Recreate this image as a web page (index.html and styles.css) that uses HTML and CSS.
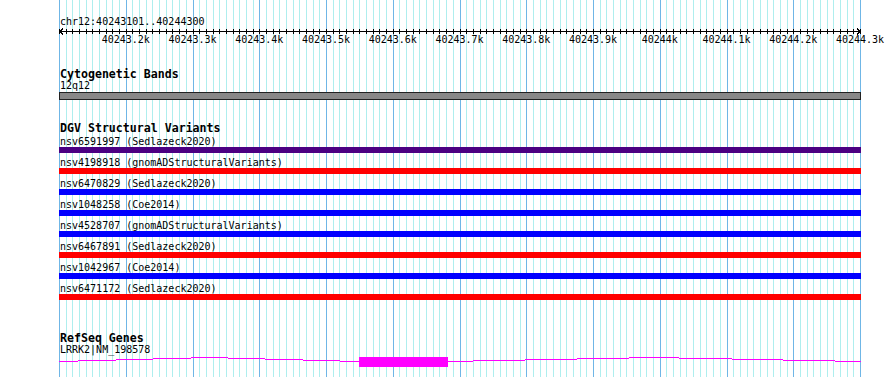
FILE: index.html
```html
<!DOCTYPE html>
<html lang="en">
<head>
	<meta charset="UTF-8">
	<title>chr12:40243101..40244300</title>
	<link rel="stylesheet" href="styles.css">
</head>
<body>
	<div class="panel">
		<div class="plot">
			<!-- 10bp = 6.675px, so the line pattern repeats every 400bp (267px) -->
			<svg class="grid" width="802" height="377" viewBox="0 0 802 377" shape-rendering="crispEdges">
				<defs>
					<path id="steps" d="M0.5 0V377M7.5 0V377M13.5 0V377M20.5 0V377M27.5 0V377M33.5 0V377M40.5 0V377M47.5 0V377M53.5 0V377M60.5 0V377M67.5 0V377M73.5 0V377M80.5 0V377M87.5 0V377M93.5 0V377M100.5 0V377M107.5 0V377M113.5 0V377M120.5 0V377M127.5 0V377M134.5 0V377M140.5 0V377M147.5 0V377M154.5 0V377M160.5 0V377M167.5 0V377M174.5 0V377M180.5 0V377M187.5 0V377M194.5 0V377M200.5 0V377M207.5 0V377M214.5 0V377M220.5 0V377M227.5 0V377M234.5 0V377M240.5 0V377M247.5 0V377M254.5 0V377M260.5 0V377"/>
					<pattern id="gridlines" width="267" height="377" patternUnits="userSpaceOnUse">
						<use href="#steps" stroke="#aeeeee"/>
						<path d="M0.5 0V377M67.5 0V377M134.5 0V377M200.5 0V377" stroke="#6fb6e6"/>
					</pattern>
					<pattern id="ticks" y="1" width="267" height="5" patternUnits="userSpaceOnUse">
						<use href="#steps" stroke="#000"/>
					</pattern>
				</defs>
				<rect width="802" height="377" fill="url(#gridlines)"/>
			</svg>

			<div class="locus">chr12:40243101..40244300</div>
			<svg class="axis" width="802" height="7" viewBox="0 0 802 7" shape-rendering="crispEdges">
				<rect y="1" width="802" height="5" fill="url(#ticks)"/>
				<path d="M1 3.5H801M1 3.5L4 0.5M1 3.5L4 6.5M801 3.5L798 0.5M801 3.5L798 6.5" stroke="#000" fill="none"/>
			</svg>
			<div class="scale">
				<span>40243.2k</span>
				<span>40243.3k</span>
				<span>40243.4k</span>
				<span>40243.5k</span>
				<span>40243.6k</span>
				<span>40243.7k</span>
				<span>40243.8k</span>
				<span>40243.9k</span>
				<span>40244k</span>
				<span>40244.1k</span>
				<span>40244.2k</span>
				<span>40244.3k</span>
			</div>

			<div class="track cyto">
				<h2>Cytogenetic Bands</h2>
				<div class="label">12q12</div>
				<div class="band"></div>
			</div>

			<div class="track dgv">
				<h2>DGV Structural Variants</h2>
				<ul>
					<li><div class="label">nsv6591997 (Sedlazeck2020)</div><div class="bar purple"></div></li>
					<li><div class="label">nsv4198918 (gnomADStructuralVariants)</div><div class="bar red"></div></li>
					<li><div class="label">nsv6470829 (Sedlazeck2020)</div><div class="bar blue"></div></li>
					<li><div class="label">nsv1048258 (Coe2014)</div><div class="bar blue"></div></li>
					<li><div class="label">nsv4528707 (gnomADStructuralVariants)</div><div class="bar blue"></div></li>
					<li><div class="label">nsv6467891 (Sedlazeck2020)</div><div class="bar red"></div></li>
					<li><div class="label">nsv1042967 (Coe2014)</div><div class="bar blue"></div></li>
					<li><div class="label">nsv6471172 (Sedlazeck2020)</div><div class="bar red"></div></li>
				</ul>
			</div>

			<div class="track genes">
				<h2>RefSeq Genes</h2>
				<div class="label">LRRK2|NM_198578</div>
				<svg class="gene" width="802" height="17" viewBox="0 0 802 17" shape-rendering="crispEdges" fill="#ff00ff">
					<rect x="0" y="6" width="19" height="1"/>
					<rect x="19" y="5" width="38" height="1"/>
					<rect x="57" y="4" width="37" height="1"/>
					<rect x="94" y="3" width="38" height="1"/>
					<rect x="132" y="2" width="37" height="1"/>
					<rect x="169" y="3" width="37" height="1"/>
					<rect x="206" y="4" width="38" height="1"/>
					<rect x="244" y="5" width="37" height="1"/>
					<rect x="281" y="6" width="19" height="1"/>
					<rect x="300" y="2" width="89" height="10"/>
					<rect x="389" y="6" width="25" height="1"/>
					<rect x="414" y="5" width="52" height="1"/>
					<rect x="466" y="4" width="52" height="1"/>
					<rect x="518" y="3" width="52" height="1"/>
					<rect x="570" y="2" width="50" height="1"/>
					<rect x="620" y="3" width="53" height="1"/>
					<rect x="673" y="4" width="51" height="1"/>
					<rect x="724" y="5" width="52" height="1"/>
					<rect x="776" y="6" width="26" height="1"/>
				</svg>
			</div>
		</div>
	</div>
</body>
</html>
```

FILE: styles.css
```css
*{margin: 0;padding: 0;}
body{
	background: #fff;
	font-family: "DejaVu Sans Mono", "Liberation Mono", monospace;
	color: #000;
}
ul{list-style: none;}
.panel{
	width: 890px;
	height: 377px;
	overflow: hidden;
}
.plot{
	position: relative;
	z-index: 0;
	margin-left: 59px;
	width: 802px;
	height: 377px;
	padding-top: 16px;
	box-sizing: border-box;
}
/* grid sits behind the tracks */
.grid{
	position: absolute;
	top: 0;
	left: 0;
	z-index: -1;
	display: block;
}
.locus{
	font-size: 10px;
	line-height: 12px;
	height: 12px;
	padding-left: 1px;
	white-space: nowrap;
}
.axis{
	display: block;
}
.scale{
	display: flex;
	margin: -1px 0 0 33.375px;
	height: 12px;
	font-size: 10px;
	line-height: 12px;
	white-space: nowrap;
}
.scale span{
	flex: none;
	width: 66.75px;
	text-align: center;
}
.track h2{
	font-size: 11.6px;
	line-height: 12px;
	height: 12px;
	padding-left: 1px;
	white-space: nowrap;
}
.label{
	font-size: 10px;
	line-height: 10px;
	height: 10px;
	padding-left: 1px;
	white-space: nowrap;
}
.cyto{
	margin-top: 22px;
}
.cyto .label{
	margin-top: 1px;
}
.band{
	margin-top: 1px;
	height: 8px;
	box-sizing: border-box;
	border: 1px solid #222;
	background: #888;
}
.dgv{
	margin-top: 22px;
}
.dgv ul{
	margin-top: 3px;
}
.bar{
	height: 6px;
	margin-bottom: 5px;
}
.purple{background: #4b0082;}
.red{background: #ff0000;}
.blue{background: #0000ff;}
.genes{
	margin-top: 32px;
}
.genes .label{
	margin-top: 1px;
}
.gene{
	display: block;
}
```
